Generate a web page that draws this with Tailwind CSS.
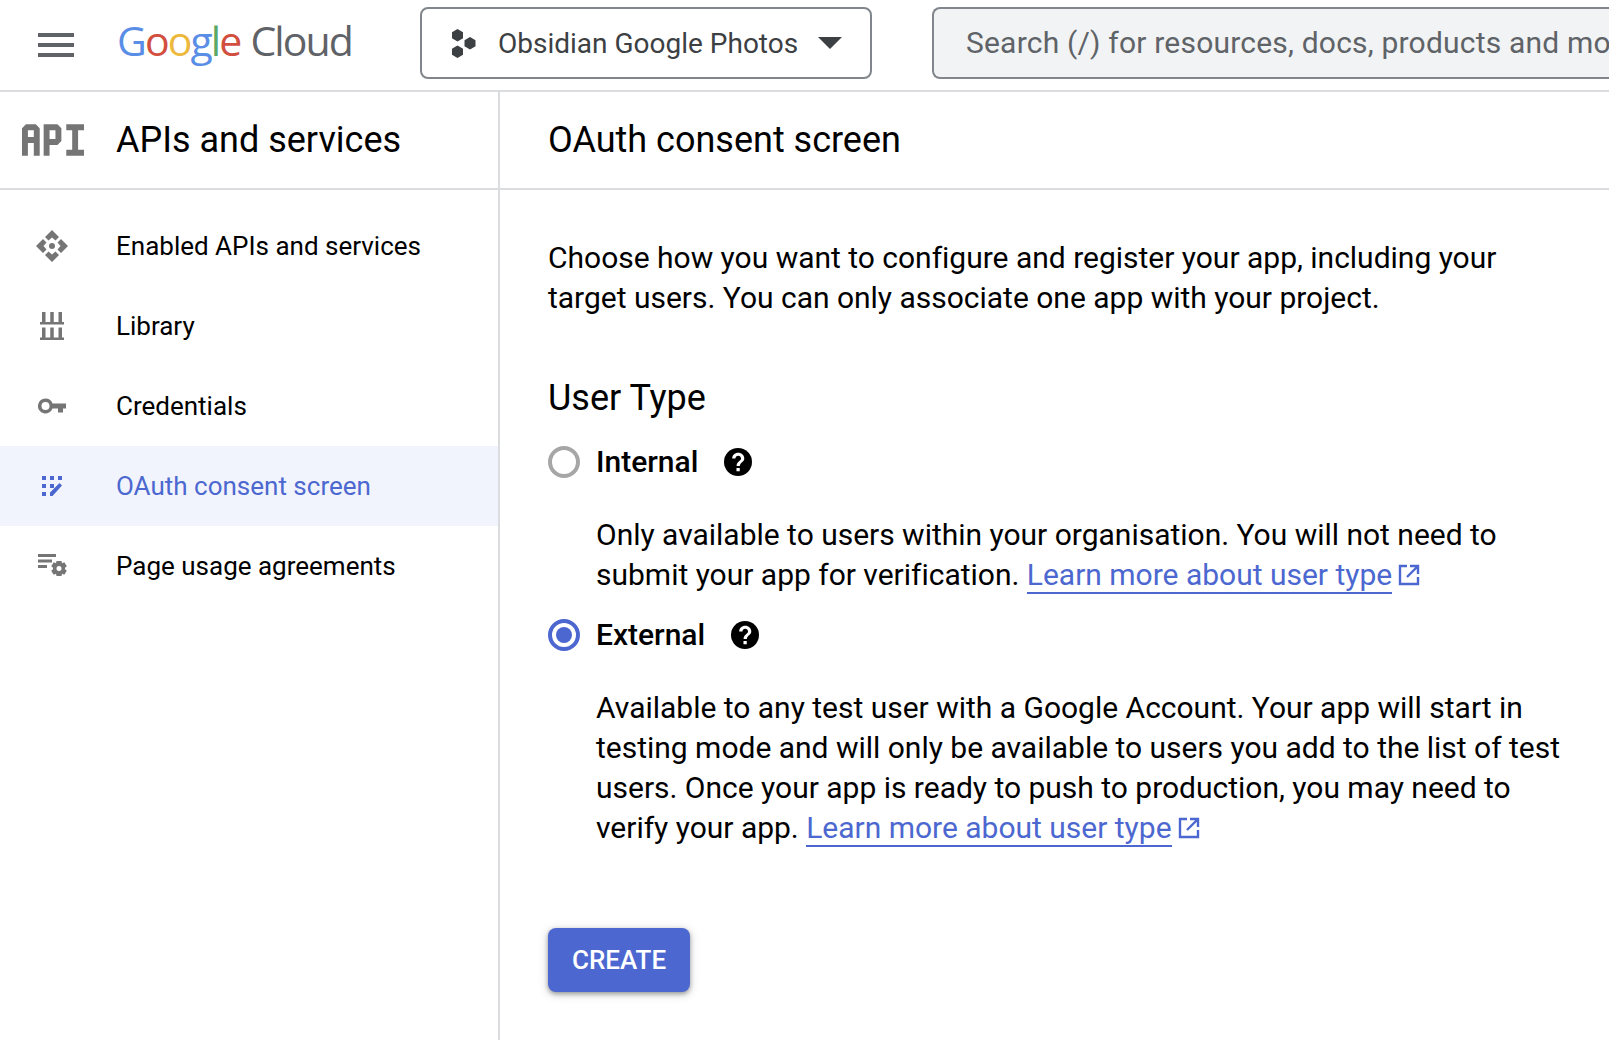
<!DOCTYPE html>
<html><head><meta charset="utf-8"><script src="https://cdn.jsdelivr.net/npm/@tailwindcss/browser@4"></script></head>
<body class="w-[1609px] h-[1040px] overflow-hidden bg-white font-['Roboto',sans-serif] text-black">
<header class="h-[92px] flex items-center border-b-2 border-[#dadce0]">
  <button class="ml-[38px] w-[36px] flex flex-col gap-[6px] shrink-0">
    <span class="block h-[4px] bg-[#5f6368]"></span><span class="block h-[4px] bg-[#5f6368]"></span><span class="block h-[4px] bg-[#5f6368]"></span>
  </button>
  <div class="ml-[43px] w-[233px] shrink-0 flex items-baseline font-['Open_Sans',sans-serif] text-[41px] leading-none tracking-[-1.9px] -mt-[9px]">
    <span class="text-[#5a8ee6]">G</span><span class="text-[#d24f40]">o</span><span class="text-[#ecb93c]">o</span><span class="text-[#5a8ee6]">g</span><span class="text-[#5aa866]">l</span><span class="text-[#d24f40]">e</span><span class="text-[#5f6368] ml-[10px]">Cloud</span>
  </div>
  <div class="ml-[70px] w-[452px] h-[72px] shrink-0 rounded-[8px] border-2 border-[#80868b] flex items-center -mt-[4px]">
    <svg class="ml-[28px] w-[28px] h-[29px]" viewBox="0 0 28 29" fill="#3c4043"><path d="M7.500 0l5.500 3.200v6.100L7.500 12.500 2 9.300V3.200zM7.500 16.500l5.500 3.200v6.100L7.500 29 2 25.800v-6.100zM20 8l5.500 3.200v6.100L20 20.500l-5.500-3.200v-6.100z"/></svg>
    <span class="ml-[20px] mt-[2px] text-[28px] text-[#3c4043] whitespace-nowrap">Obsidian Google Photos</span>
    <svg class="ml-[20px] w-[24px] h-[12px]" viewBox="0 0 24 12" fill="#3c4043"><path d="M0 0h24L12 12z"/></svg>
  </div>
  <div class="ml-[60px] grow h-[72px] rounded-l-[8px] border-2 border-r-0 border-[#80868b] bg-[#f1f3f4] flex items-center pl-[32px] overflow-hidden -mt-[4px]">
    <span class="text-[30px] -mt-[2px] text-[#5f6368] tracking-[.2px] whitespace-nowrap">Search (/) for resources, docs, products and more</span>
  </div>
</header>
<div class="flex h-[948px]">
  <aside class="w-[500px] shrink-0 border-r-2 border-[#dadce0]">
    <div class="h-[98px] flex items-center border-b-2 border-[#dadce0]">
      <svg class="ml-[22px] w-[62px] h-[32px] shrink-0" viewBox="0 0 63 32" fill="#757575"><path d="M0 32V4l4-4h10l4 4v28h-6V19H6v13zM6 13h6V6H6zM22 32V0h14l4 4v13l-4 4H28v11zM28 15h6V6h-6zM45 0h18v6h-6v20h6v6H45v-6h6V6h-6z" fill-rule="evenodd"/></svg>
      <span class="ml-[32px] text-[36px] whitespace-nowrap">APIs and services</span>
    </div>
    <nav class="pt-[16px]">
      <a class="h-[80px] flex items-center">
        <svg class="ml-[36px] w-[32px] h-[32px] shrink-0" viewBox="0 0 32 32" fill="#757575"><path d="M16 0L23 7L19.500 10.500L16 7.500L12.500 10.500L9 7zM0 16L7 9L10.500 12.500L7.500 16L10.500 19.500L7 23zM32 16L25 23L21.500 19.500L24.500 16L21.500 12.500L25 9zM16 32L9 25L12.500 21.500L16 24.500L19.500 21.500L23 25z"/><circle cx="16" cy="16" r="3"/></svg>
        <span class="ml-[48px] text-[26px] whitespace-nowrap">Enabled APIs and services</span>
      </a>
      <a class="h-[80px] flex items-center">
        <svg class="ml-[40px] w-[24px] h-[28px] shrink-0" viewBox="0 0 24 28" fill="#757575"><path d="M2 0h3.500v10H2zM10.250 0h3.500v10h-3.500zM18.500 0h3.500v10h-3.500zM0 10h24v2.500H0zM2 15.500h3.500v10H2zM10.250 15.500h3.500v10h-3.500zM18.500 15.500h3.500v10h-3.500zM0 25.500h24V28H0z"/></svg>
        <span class="ml-[52px] text-[26px] whitespace-nowrap">Library</span>
      </a>
      <a class="h-[80px] flex items-center">
        <svg class="ml-[38px] w-[28px] h-[16px] shrink-0" viewBox="0 0 28 16" fill="#757575"><path fill-rule="evenodd" d="M7.500 0.500a7.500 7.500 0 0 1 7 5H28v5h-3v4h-5v-4h-5.500a7.500 7.500 0 1 1-7-10zm0 3.500a4 4 0 1 0 0 8 4 4 0 0 0 0-8z"/></svg>
        <span class="ml-[50px] text-[26px] whitespace-nowrap">Credentials</span>
      </a>
      <a class="h-[80px] flex items-center bg-[#f1f4fd]">
        <svg class="ml-[42px] w-[20px] h-[20px] shrink-0" viewBox="0 0 20 20" fill="#4c68d0"><path d="M0 0h4v4H0zM8 0h4v4H8zM16 0h4v4h-4zM0 8h4v4H0zM8 8h4v4H8zM0 16h4v4H0zM8 20l0-3.500L17.500 7l2.500 2.500L10.500 20z"/></svg>
        <span class="ml-[54px] text-[26px] text-[#4c68d0] whitespace-nowrap">OAuth consent screen</span>
      </a>
      <a class="h-[80px] flex items-center">
        <svg class="ml-[38px] w-[30px] h-[24px] shrink-0" viewBox="0 0 30 24" fill="#757575"><path d="M0 0h18v3H0zM0 5.500h14v3H0zM0 11h9v3H0z"/><path fill-rule="evenodd" d="M18.500 7h5l.5 2.200 2.300-.9 2.500 4-1.800 1.500v1.400l1.800 1.500-2.500 4-2.300-.9-.5 2.200h-5l-.5-2.200-2.300.9-2.500-4 1.800-1.500v-1.400l-1.800-1.500 2.500-4 2.300.9zm2.500 5a2.500 2.500 0 1 0 0 5 2.500 2.500 0 0 0 0-5z"/></svg>
        <span class="ml-[48px] text-[26px] whitespace-nowrap">Page usage agreements</span>
      </a>
    </nav>
  </aside>
  <main class="grow min-w-0">
    <div class="h-[98px] flex items-center border-b-2 border-[#dadce0] pl-[48px]">
      <h1 class="text-[36px] font-normal">OAuth consent screen</h1>
    </div>
    <div class="pl-[48px] pr-[40px] pt-[48px] text-[30px] tracking-[-.01px] leading-[40px]">
      <p class="w-[1010px]">Choose how you want to configure and register your app, including your target users. You can only associate one app with your project.</p>
      <h2 class="mt-[58px] text-[36px] leading-[44px] font-normal">User Type</h2>
      <div class="mt-[22px] h-[40px] flex items-center">
        <span class="w-[32px] h-[32px] rounded-full border-[4px] border-[#a6a6a6] shrink-0"></span>
        <span class="ml-[16px] font-medium">Internal</span>
        <svg class="ml-[26px] w-[28px] h-[28px]" viewBox="0 0 24 24"><circle cx="12" cy="12" r="12"/><path fill="#fff" d="M10.700 20h2.800v-2.800h-2.800zM12.200 4c-3 0-5.200 2.200-5.200 5h2.800c0-1.300 1.100-2.400 2.400-2.400s2.400 1.100 2.400 2.400c0 2.300-3.800 2.200-3.800 6.500h2.800c0-3 3.800-3.400 3.800-6.500 0-2.800-2.200-5-5.200-5z"/></svg>
      </div>
      <p class="mt-[33px] pl-[48px] w-[1030px]">Only available to users within your organisation. You will not need to submit your app for verification. <a class="text-[#4c68d0] border-b-2 border-[#4c68d0]">Learn more about user type</a><svg class="inline-block ml-[6px] w-[22px] h-[22px] align-[-1px]" viewBox="0 0 22 22" fill="none" stroke="#4c68d0" stroke-width="2.400"><path d="M9 2H2v18h18v-7M12 2h8v8M20 2L9 13"/></svg></p>
      <div class="mt-[20px] h-[40px] flex items-center">
        <span class="w-[32px] h-[32px] rounded-full border-[4px] border-[#4c68d0] shrink-0 flex items-center justify-center"><span class="w-[16px] h-[16px] rounded-full bg-[#4c68d0]"></span></span>
        <span class="ml-[16px] font-medium">External</span>
        <svg class="ml-[26px] w-[28px] h-[28px]" viewBox="0 0 24 24"><circle cx="12" cy="12" r="12"/><path fill="#fff" d="M10.700 20h2.800v-2.800h-2.800zM12.200 4c-3 0-5.200 2.200-5.200 5h2.800c0-1.300 1.100-2.400 2.400-2.400s2.400 1.100 2.400 2.400c0 2.300-3.800 2.200-3.800 6.500h2.800c0-3 3.800-3.400 3.800-6.500 0-2.800-2.200-5-5.200-5z"/></svg>
      </div>
      <p class="mt-[33px] pl-[48px] w-[1030px]">Available to any test user with a Google Account. Your app will start in testing mode and will only be available to users you add to the list of test users. Once your app is ready to push to production, you may need to verify your app. <a class="text-[#4c68d0] border-b-2 border-[#4c68d0]">Learn more about user type</a><svg class="inline-block ml-[6px] w-[22px] h-[22px] align-[-1px]" viewBox="0 0 22 22" fill="none" stroke="#4c68d0" stroke-width="2.400"><path d="M9 2H2v18h18v-7M12 2h8v8M20 2L9 13"/></svg></p>
      <button class="mt-[80px] w-[142px] h-[64px] rounded-[8px] bg-[#4c68d0] text-white text-[26px] font-medium shadow-[0_2px_4px_rgba(60,64,67,.45),0_2px_8px_2px_rgba(60,64,67,.15)]">CREATE</button>
    </div>
  </main>
</div>
</body></html>
